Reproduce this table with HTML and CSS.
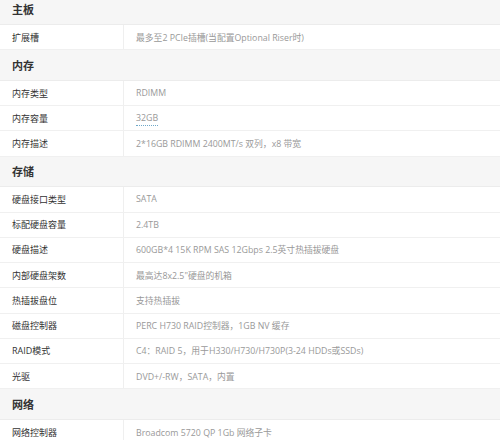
FILE: index.html
```html
<!DOCTYPE html>
<html lang="zh-CN">
<head>
<meta charset="utf-8">
<link rel="stylesheet" href="styles.css">
</head>
<body>
<div class="spec">
  <div class="head">主板</div>
  <div class="row"><div class="k">扩展槽</div><div class="v">最多至2 PCIe插槽(当配置Optional Riser时)</div></div>

  <div class="head">内存</div>
  <div class="row"><div class="k">内存类型</div><div class="v">RDIMM</div></div>
  <div class="row"><div class="k">内存容量</div><div class="v"><span class="dotted">32GB</span></div></div>
  <div class="row"><div class="k">内存描述</div><div class="v">2*16GB RDIMM 2400MT/s 双列，x8 带宽</div></div>

  <div class="head">存储</div>
  <div class="row"><div class="k">硬盘接口类型</div><div class="v">SATA</div></div>
  <div class="row"><div class="k">标配硬盘容量</div><div class="v">2.4TB</div></div>
  <div class="row"><div class="k">硬盘描述</div><div class="v">600GB*4 15K RPM SAS 12Gbps 2.5英寸热插拔硬盘</div></div>
  <div class="row"><div class="k">内部硬盘架数</div><div class="v">最高达8x2.5"硬盘的机箱</div></div>
  <div class="row"><div class="k">热插拔盘位</div><div class="v">支持热插拔</div></div>
  <div class="row"><div class="k">磁盘控制器</div><div class="v">PERC H730 RAID控制器，1GB NV 缓存</div></div>
  <div class="row"><div class="k">RAID模式</div><div class="v">C4：RAID 5，用于H330/H730/H730P(3-24 HDDs或SSDs)</div></div>
  <div class="row"><div class="k">光驱</div><div class="v">DVD+/-RW，SATA，内置</div></div>

  <div class="head">网络</div>
  <div class="row"><div class="k">网络控制器</div><div class="v">Broadcom 5720 QP 1Gb 网络子卡</div></div>
</div>
</body>
</html>
```

FILE: styles.css
```css
html, body {
  margin: 0;
  padding: 0;
  background: #fff;
}
body {
  font-family: "Open Sans", "Noto Sans CJK SC", sans-serif;
  overflow: hidden;
}
.spec {
  margin-top: -5.5px;
  width: 500px;
}
.head {
  box-sizing: border-box;
  height: 30.6px;
  background: #f6f6f6;
  border-bottom: 1px solid #ececec;
  display: flex;
  align-items: center;
  padding-left: 12px;
  font-size: 11px;
  font-weight: bold;
  color: #333;
}
.row {
  box-sizing: border-box;
  height: 25.25px;
  display: grid;
  grid-template-columns: 124px 1fr;
  border-bottom: 1px solid #f0f0f0;
}
.k {
  border-right: 1px solid #efefef;
  display: flex;
  align-items: center;
  padding-left: 12px;
  font-size: 9px;
  color: #333;
}
.v {
  display: flex;
  align-items: center;
  padding-left: 12px;
  font-size: 8.8px;
  color: #999;
  white-space: nowrap;
}
.dotted {
  border-bottom: 1px dotted #6fa8c8;
  line-height: 1.15;
  padding-bottom: 2px;
  margin-top: 3px;
}
```
